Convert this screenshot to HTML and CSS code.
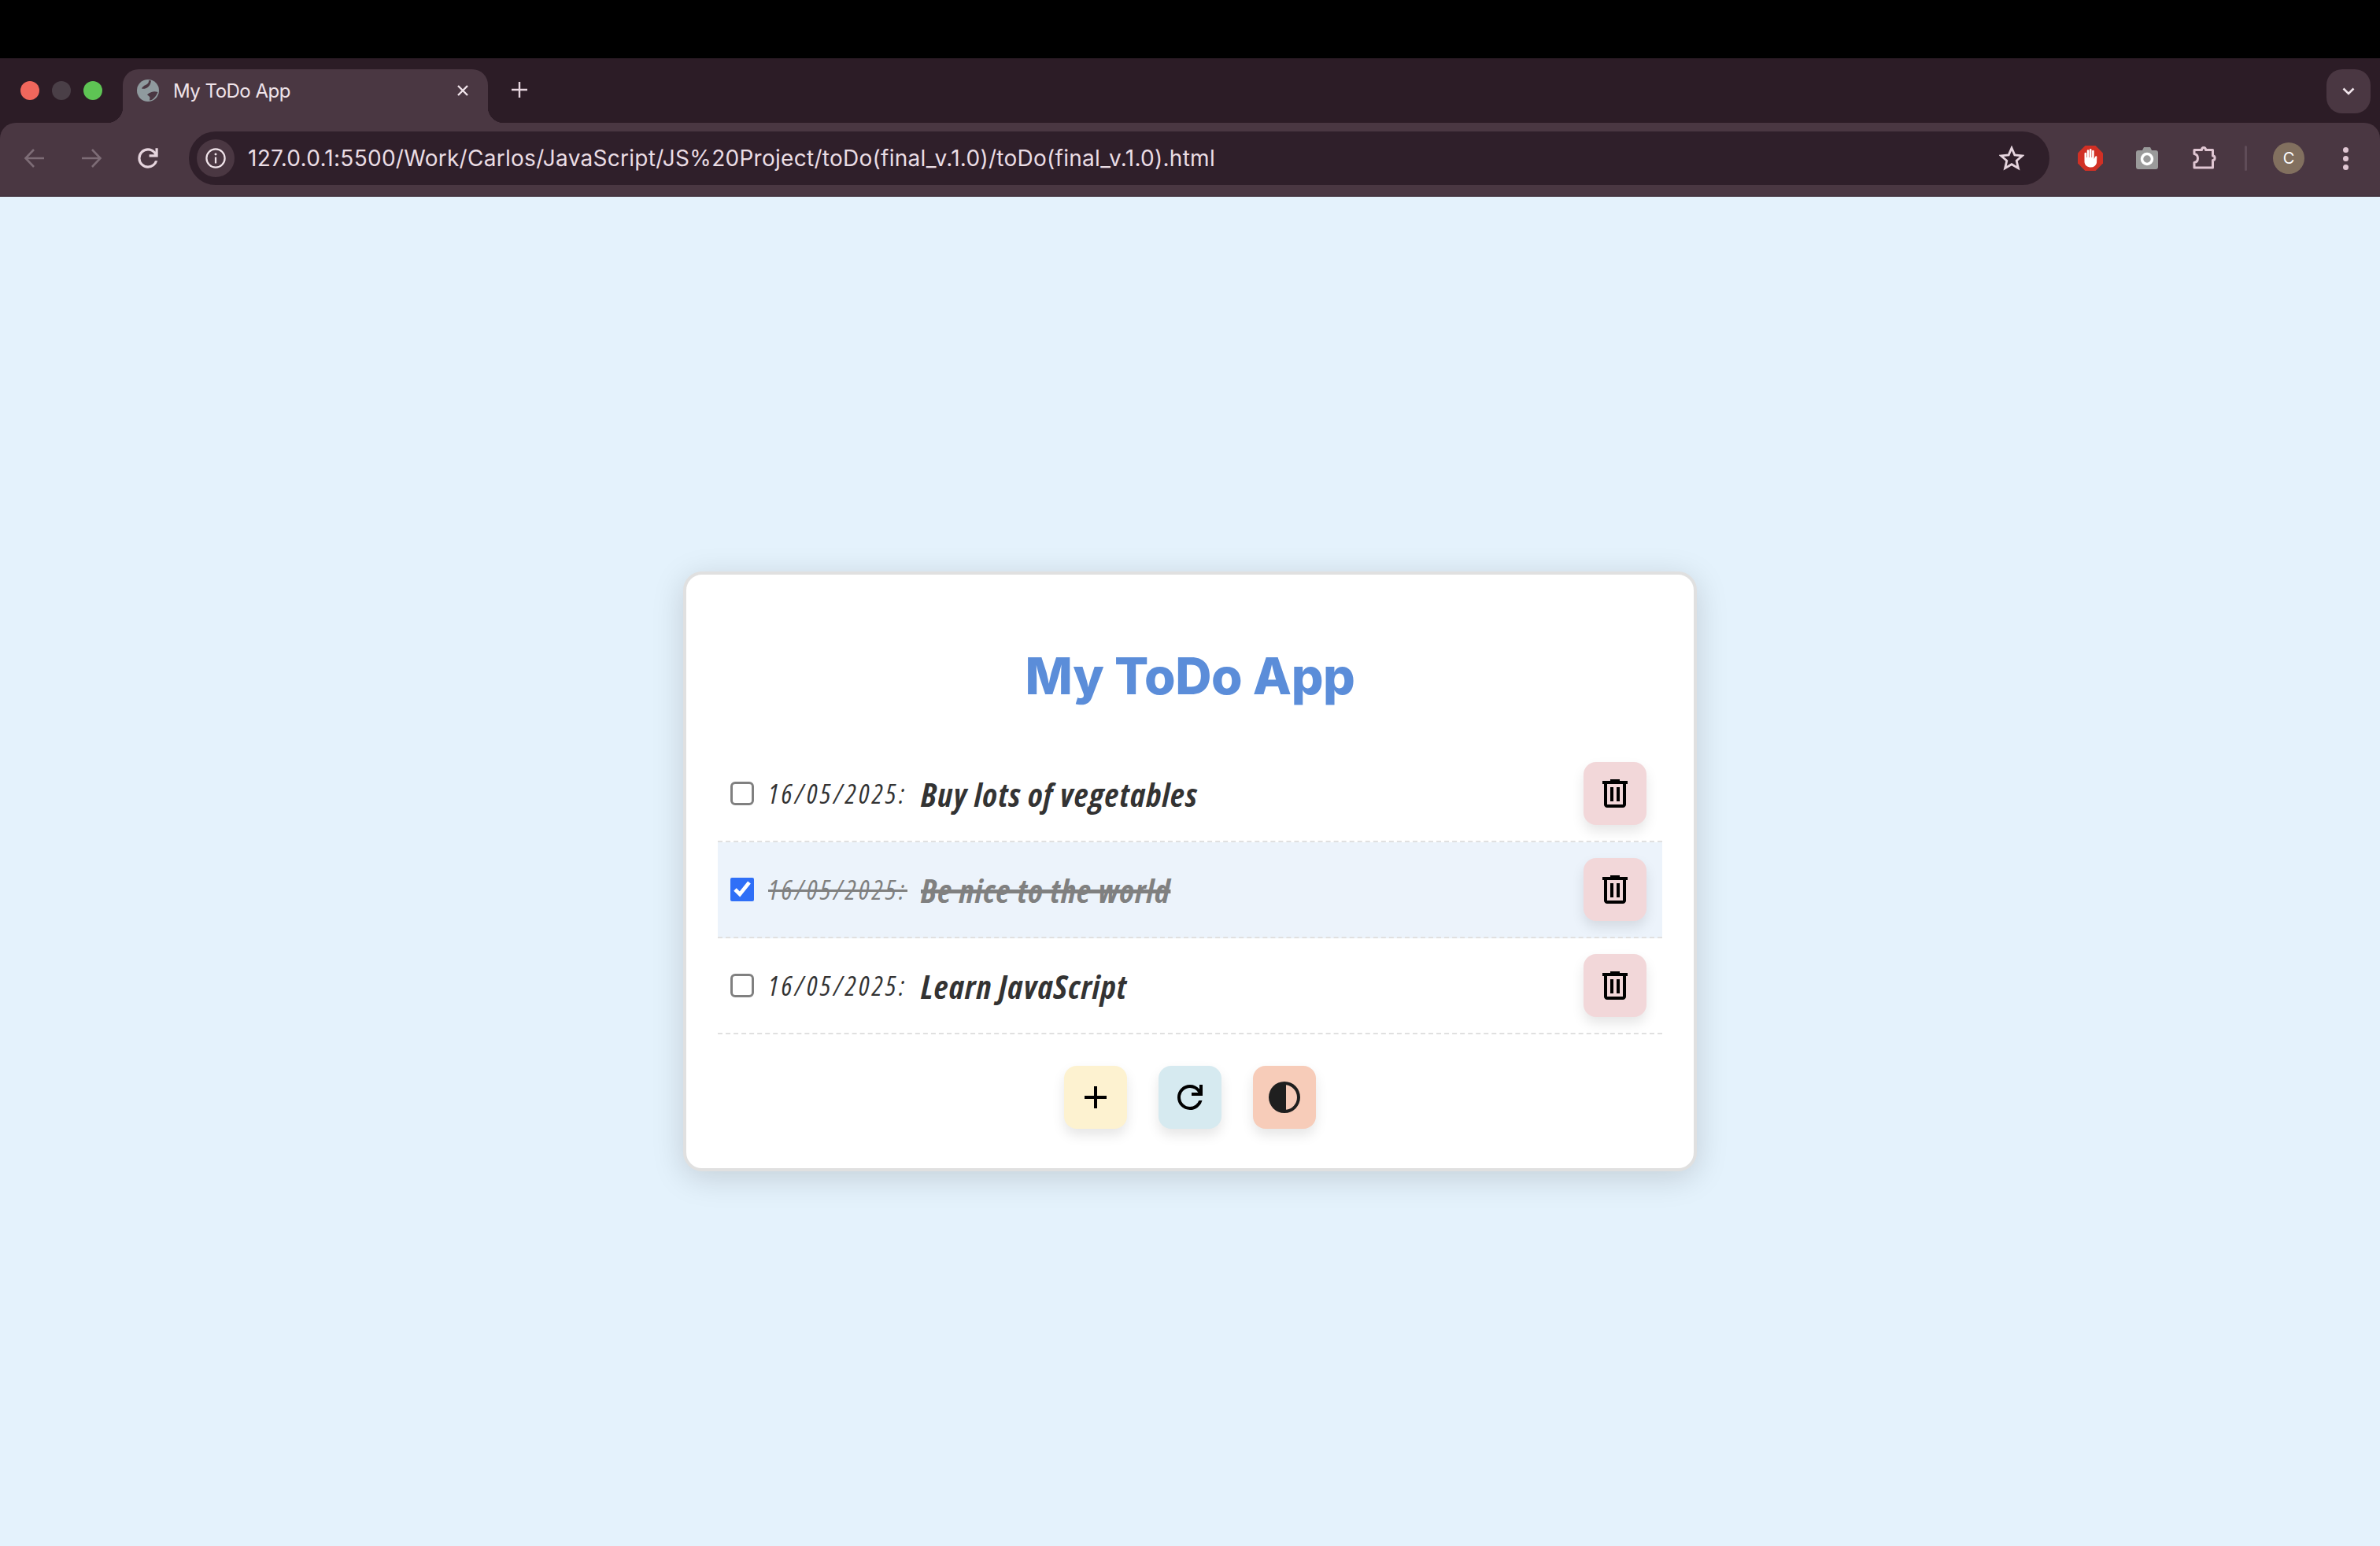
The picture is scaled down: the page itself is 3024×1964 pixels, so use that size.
FILE: index.html
```html
<!DOCTYPE html>
<html lang="en">
<head>
  <meta charset="UTF-8">
  <title>My ToDo App</title>
  <link rel="stylesheet" href="styles.css">
</head>
<body>

  <div class="chrome">
    <div class="tabstrip">
      <div class="lights">
        <span class="light red"></span>
        <span class="light grey"></span>
        <span class="light green"></span>
      </div>
      <div class="tab">
        <svg class="favicon" viewBox="0 0 28 28">
          <circle cx="14" cy="14" r="14" fill="#8f9a9e"/>
          <path d="M15 1c.5 3-1.500 5-4 6-2.500 1-4 2.500-5 4.500 3 .8 5.500 0 7.500-1.500 2-1.500 4-4 4.500-8.500z" fill="#4a3742"/>
          <path d="M26.500 16c-3-1-5.500-1-8 0-2.500 1-4.500 2-5.500 3.500 1.500.8 3 2 3.500 3.500l-.5 3.500c4 0 8.500-5 10.500-10.500z" fill="#4a3742"/>
        </svg>
        <span class="tab-title">My ToDo App</span>
        <svg class="tab-close" viewBox="0 0 16 16">
          <path d="M2 2l12 12M14 2L2 14" stroke="#f0e4ea" stroke-width="2.4"/>
        </svg>
      </div>
      <svg class="new-tab" viewBox="0 0 22 22">
        <path d="M11 1v20M1 11h20" stroke="#e6d5de" stroke-width="2.4"/>
      </svg>
      <div class="tab-search">
        <svg viewBox="0 0 16 10" class="chevron">
          <path d="M1.500 1.500L8 8l6.500-6.500" fill="none" stroke="#f0e4ea" stroke-width="2.6"/>
        </svg>
      </div>
    </div>

    <div class="toolbar">
      <svg class="nav" viewBox="0 0 28 28">
        <path d="M26 14H3M13 3L2.500 14 13 25" fill="none" stroke="#7d6c76" stroke-width="2.6"/>
      </svg>
      <svg class="nav" viewBox="0 0 28 28">
        <path d="M2 14h23M15 3l10.500 11L15 25" fill="none" stroke="#7d6c76" stroke-width="2.6"/>
      </svg>
      <svg class="nav reload" viewBox="0 -960 960 960">
        <path fill="#e6d5de" d="M480-160q-134 0-227-93t-93-227q0-134 93-227t227-93q69 0 132 28.500T720-690v-110h80v280H520v-80h168q-32-56-87.500-88T480-720q-100 0-170 70t-70 170q0 100 70 170t170 70q77 0 139-44t87-116h84q-28 106-114 173t-196 67Z"/>
      </svg>
      <div class="omnibox">
        <span class="site-info">
          <svg viewBox="0 0 28 28" class="info-icon">
            <circle cx="14" cy="14" r="12.500" fill="none" stroke="#f0e4ea" stroke-width="2.4"/>
            <path d="M14 12.500V21" stroke="#f0e4ea" stroke-width="2.4"/>
            <circle cx="14" cy="8.500" r="1.600" fill="#f0e4ea"/>
          </svg>
        </span>
        <span class="url">127.0.0.1:5500/Work/Carlos/JavaScript/JS%20Project/toDo(final_v.1.0)/toDo(final_v.1.0).html</span>
        <svg class="star" viewBox="0 0 32 32">
          <path d="M16 3l3.800 8.900 9.700.9-7.300 6.400 2.200 9.500L16 23.700 7.600 28.700l2.200-9.500-7.300-6.400 9.700-.9z" fill="none" stroke="#e6d5de" stroke-width="2.8"/>
        </svg>
      </div>
      <div class="extensions">
        <svg class="ext" viewBox="0 0 32 32">
          <path d="M9.400 0h13.200L32 9.400v13.200L22.600 32H9.400L0 22.600V9.400z" fill="#d13025"/>
          <path d="M8.500 15.500V10a1.300 1.300 0 0 1 2.600 0v5h.6V6.500a1.300 1.300 0 0 1 2.600 0V15h.6V5.200a1.300 1.300 0 0 1 2.600 0V15h.6V7a1.300 1.300 0 0 1 2.600 0v10l1.400-3c.7-1.400 2.700-.6 2.200.9L24 22c-1 3.500-3.500 5.500-7.500 5.500s-8-2.500-8-7z" fill="#fff"/>
        </svg>
        <svg class="ext" viewBox="0 0 32 32">
          <path d="M10 6l2-4h8l2 4h5a3 3 0 0 1 3 3v18a3 3 0 0 1-3 3H5a3 3 0 0 1-3-3V9a3 3 0 0 1 3-3z" fill="#9a9a9a"/>
          <circle cx="16" cy="17" r="6.500" fill="none" stroke="#fff" stroke-width="3.5"/>
        </svg>
        <svg class="ext" viewBox="0 0 32 32">
          <path d="M4 5.500h9.500c0-4 5-4 5 0h9V13c3.500 0 3.500 5.500 0 5.500V28H4v-6.500c3.500-.5 4.500-2.500 4.500-5.500S7 11 4 10.500z" fill="none" stroke="#e0c6d2" stroke-width="3" stroke-linejoin="round"/>
        </svg>
      </div>
      <span class="divider"></span>
      <span class="avatar">C</span>
      <span class="kebab"><i></i><i></i><i></i></span>
    </div>
  </div>

  <main class="page">
    <div class="card">
      <h1 class="app-title">My ToDo App</h1>

      <ul class="todo-list">
        <li class="todo">
          <input type="checkbox" class="todo-check">
          <span class="todo-date">16/05/2025:</span>
          <span class="todo-text">Buy lots of vegetables</span>
          <button class="icon-btn delete-btn">
            <svg viewBox="0 -960 960 960"><path d="M280-120q-33 0-56.500-23.500T200-200v-520h-40v-80h200v-40h240v40h200v80h-40v520q0 33-23.500 56.500T680-120H280Zm400-600H280v520h400v-520ZM360-280h80v-360h-80v360Zm160 0h80v-360h-80v360ZM280-720v520-520Z"/></svg>
          </button>
        </li>
        <li class="todo done">
          <input type="checkbox" class="todo-check" checked>
          <span class="todo-date">16/05/2025:</span>
          <span class="todo-text">Be nice to the world</span>
          <button class="icon-btn delete-btn">
            <svg viewBox="0 -960 960 960"><path d="M280-120q-33 0-56.500-23.500T200-200v-520h-40v-80h200v-40h240v40h200v80h-40v520q0 33-23.500 56.500T680-120H280Zm400-600H280v520h400v-520ZM360-280h80v-360h-80v360Zm160 0h80v-360h-80v360ZM280-720v520-520Z"/></svg>
          </button>
        </li>
        <li class="todo">
          <input type="checkbox" class="todo-check">
          <span class="todo-date">16/05/2025:</span>
          <span class="todo-text">Learn JavaScript</span>
          <button class="icon-btn delete-btn">
            <svg viewBox="0 -960 960 960"><path d="M280-120q-33 0-56.500-23.500T200-200v-520h-40v-80h200v-40h240v40h200v80h-40v520q0 33-23.500 56.500T680-120H280Zm400-600H280v520h400v-520ZM360-280h80v-360h-80v360Zm160 0h80v-360h-80v360ZM280-720v520-520Z"/></svg>
          </button>
        </li>
      </ul>

      <div class="actions">
        <button class="icon-btn add-btn">
          <svg viewBox="0 -960 960 960"><path d="M440-440H200v-80h240v-240h80v240h240v80H520v240h-80v-240Z"/></svg>
        </button>
        <button class="icon-btn reset-btn">
          <svg viewBox="0 -960 960 960"><path d="M480-160q-134 0-227-93t-93-227q0-134 93-227t227-93q69 0 132 28.500T720-690v-110h80v280H520v-80h168q-32-56-87.500-88T480-720q-100 0-170 70t-70 170q0 100 70 170t170 70q77 0 139-44t87-116h84q-28 106-114 173t-196 67Z"/></svg>
        </button>
        <button class="icon-btn theme-btn">
          <svg viewBox="0 -960 960 960"><path d="M480-80q-83 0-156-31.500T197-197q-54-54-85.500-127T80-480q0-83 31.500-156T197-763q54-54 127-85.500T480-880q83 0 156 31.500T763-763q54 54 85.500 127T880-480q0 83-31.500 156T763-197q-54 54-127 85.500T480-80Zm40-83q119-15 199.500-104.500T800-480q0-123-80.500-212.500T520-797v634Z"/></svg>
        </button>
      </div>
    </div>
  </main>

</body>
</html>
```

FILE: styles.css
```css
* {
  box-sizing: border-box;
}

body {
  font-family: "Liberation Sans", Arial, sans-serif;
  display: flex;
  flex-direction: column;
  height: 100vh;
  margin: 0;
  background-color: #e4f2fc;
  overflow: hidden;
}

/* browser chrome */
.chrome {
  flex: none;
  padding-top: 78px;
  background: linear-gradient(#000 74px, #2c1c26 74px);
}

.tabstrip {
  height: 78px;
  display: flex;
  align-items: flex-end;
}

.lights {
  width: 156px;
  height: 66px;
  margin-bottom: 8px;
  padding-left: 26px;
  display: flex;
  align-items: center;
  gap: 16px;
}

.light {
  width: 24px;
  height: 24px;
  border-radius: 50%;
}

.red { background-color: #f1675c; }
.grey { background-color: #4a3f47; }
.green { background-color: #5ec454; }

.tab {
  position: relative;
  width: 464px;
  height: 68px;
  padding: 0 24px 14px 18px;
  display: flex;
  align-items: center;
  background-color: #4a3742;
  border-radius: 20px 20px 0 0;
}

.tab::before,
.tab::after {
  content: "";
  position: absolute;
  bottom: 0;
  width: 20px;
  height: 20px;
}

.tab::before {
  left: -20px;
  background: radial-gradient(circle at 0 0, transparent 20px, #4a3742 20.5px);
}

.tab::after {
  right: -20px;
  background: radial-gradient(circle at 100% 0, transparent 20px, #4a3742 20.5px);
}

.favicon {
  width: 28px;
  height: 28px;
  flex: none;
}

.tab-title {
  margin-left: 18px;
  flex: 1;
  font-family: Inter, sans-serif;
  font-size: 24px;
  letter-spacing: -0.5px;
  color: #f0e4ea;
}

.tab-close {
  width: 16px;
  height: 16px;
}

.new-tab {
  width: 22px;
  height: 22px;
  margin: 0 0 31px 29px;
}

.tab-search {
  width: 56px;
  height: 56px;
  margin: 0 12px 12px auto;
  display: flex;
  align-items: center;
  justify-content: center;
  background-color: #4a3742;
  border-radius: 20px;
}

.chevron {
  width: 16px;
  height: 10px;
}

.toolbar {
  height: 94px;
  display: flex;
  align-items: center;
  padding: 0 0 2px 30px;
  background-color: #4a3742;
  border-radius: 20px 20px 0 0;
  border-bottom: 2px solid #453540;
}

.nav {
  width: 28px;
  height: 28px;
  margin-right: 44px;
  flex: none;
}

.nav.reload {
  width: 38px;
  height: 38px;
  margin: 0 33px 0 -5px;
}

.omnibox {
  width: 2364px;
  height: 68px;
  padding: 0 32px 0 10px;
  display: flex;
  align-items: center;
  background-color: #2f1f2a;
  border-radius: 34px;
}

.site-info {
  width: 48px;
  height: 48px;
  flex: none;
  display: flex;
  align-items: center;
  justify-content: center;
  background-color: #4a3742;
  border-radius: 50%;
}

.info-icon {
  width: 26px;
  height: 26px;
}

.url {
  margin-left: 17px;
  flex: 1;
  font-family: Inter, sans-serif;
  font-size: 28px;
  letter-spacing: 0.28px;
  color: #eadde4;
  white-space: nowrap;
}

.star {
  width: 32px;
  height: 32px;
}

.extensions {
  margin-left: 36px;
  display: flex;
  align-items: center;
  gap: 40px;
}

.ext {
  width: 32px;
  height: 32px;
}

.divider {
  width: 3px;
  height: 32px;
  margin-left: 36px;
  background-color: #5f4c58;
  border-radius: 2px;
}

.avatar {
  width: 40px;
  height: 40px;
  margin-left: 33px;
  display: flex;
  align-items: center;
  justify-content: center;
  font-family: Inter, sans-serif;
  font-size: 20px;
  color: #fff;
  background-color: #82705f;
  border-radius: 50%;
}

.kebab {
  margin-left: 49px;
  display: flex;
  flex-direction: column;
  gap: 4px;
}

.kebab i {
  width: 7px;
  height: 7px;
  background-color: #e0c6d2;
  border-radius: 50%;
}

/* the app */
.page {
  flex: 1;
  display: flex;
  align-items: center;
  justify-content: center;
}

.card {
  width: 1288px;
  height: 762px;
  padding: 94px 40px 50px;
  background-color: #fff;
  border: 4px solid #e0e0e0;
  border-radius: 24px;
  box-shadow: 0 8px 40px rgba(0, 0, 0, 0.15);
}

.app-title {
  margin: 0 0 54px;
  font-family: Inter, sans-serif;
  font-size: 64px;
  line-height: 70px;
  font-weight: 800;
  letter-spacing: -0.4px;
  text-align: center;
  color: #5b8dd9;
}

.todo-list {
  margin: 0;
  padding: 0;
  list-style: none;
}

.todo {
  height: 122px;
  padding: 0 20px 0 16px;
  display: flex;
  align-items: center;
  border-bottom: 2px dashed #e0e0e0;
  color: #333;
}

.todo.done {
  background-color: #ecf3fb;
  color: #808080;
}

.todo-check {
  width: 30px;
  height: 30px;
  margin: 0 18px 0 0;
  flex: none;
  accent-color: #2f6ff7;
}

.todo-check:not(:checked) {
  appearance: none;
  background-color: #fff;
  border: 3px solid #808080;
  border-radius: 6px;
}

/* no handwriting font here, so a condensed italic stands in for it */
.todo-date {
  margin-right: 17px;
  font-family: "Open Sans", sans-serif;
  font-stretch: 80%;
  font-style: italic;
  font-weight: 400;
  font-size: 34px;
  letter-spacing: 3.9px;
}

.todo-text {
  flex: 1;
  font-family: "Open Sans", sans-serif;
  font-stretch: 75%;
  font-style: italic;
  font-weight: 700;
  font-size: 42px;
  letter-spacing: 1.2px;
}

.done .todo-date {
  text-decoration: line-through 3px;
}

.done .todo-text {
  text-decoration: line-through 5px;
}

.icon-btn {
  width: 80px;
  height: 80px;
  padding: 0;
  flex: none;
  display: flex;
  align-items: center;
  justify-content: center;
  border: none;
  border-radius: 16px;
  box-shadow: 0 8px 16px rgba(0, 0, 0, 0.1);
  cursor: pointer;
}

.icon-btn svg {
  width: 48px;
  height: 48px;
}

.delete-btn { background-color: #f2d7d9; }
.add-btn { background-color: #fdf2d0; }
.reset-btn { background-color: #d6eaf0; }
.theme-btn { background-color: #f7ccb9; }
.theme-btn svg { fill: #1f1f1f; }

.actions {
  margin-top: 40px;
  display: flex;
  justify-content: center;
  gap: 40px;
}
```
